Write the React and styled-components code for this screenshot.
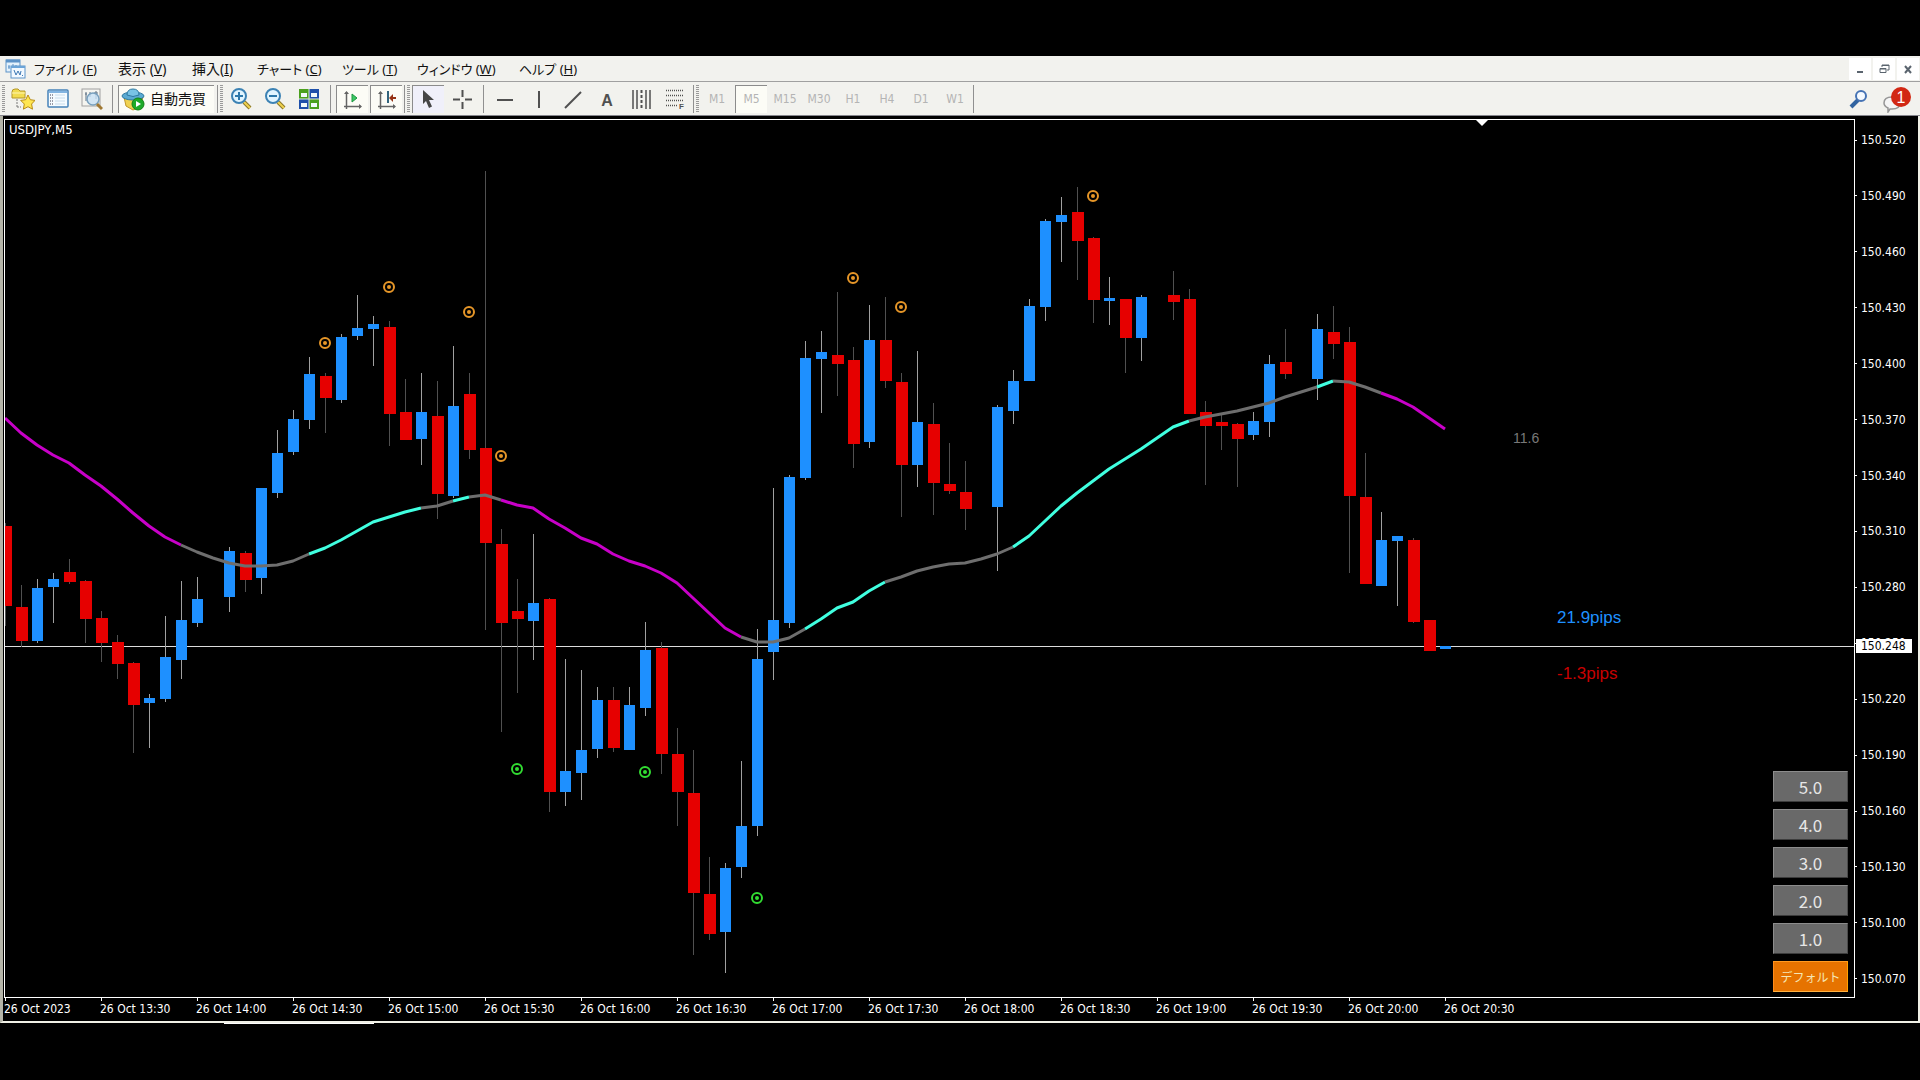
import React, { useState } from "react"
import styled, { createGlobalStyle, css } from "styled-components"

const uiFont = `"Liberation Sans", "Noto Sans CJK JP", sans-serif`
const menuFont = `"Noto Sans", "Noto Sans CJK JP", sans-serif`
const chartFont = `"DejaVu Sans Condensed", "Noto Sans", sans-serif`

const STEP = 16 // px per M5 bar
const BLUE = "#1e90ff"
const RED = "#e60000"
const trendColors = { m: "#c800c8", g: "#6e6e6e", c: "#40ffe0" }

const menus = [
  ["ファイル (", "F", 13],
  ["表示 (", "V", 14],
  ["挿入(", "I", 14],
  ["チャート (", "C", 13],
  ["ツール (", "T", 13],
  ["ウィンドウ (", "W", 13],
  ["ヘルプ (", "H", 13],
]
const periods = ["M1", "M5", "M15", "M30", "H1", "H4", "D1", "W1"]
const lots = ["5.0", "4.0", "3.0", "2.0", "1.0"]
const prices = Array.from({ length: 16 }, (v, i) => (150.52 - i * 0.03).toFixed(3))
const times = [
  "2023", "13:30", "14:00", "14:30", "15:00", "15:30", "16:00", "16:30",
  "17:00", "17:30", "18:00", "18:30", "19:00", "19:30", "20:00", "20:30",
]

// [bar, up, high, body top, body bottom, low]
const candles = [
  [0, 0, 404, 407, 487, 507], [1, 0, 466, 488, 522, 528], [2, 1, 460, 469, 522, 524],
  [3, 1, 454, 460, 468, 504], [4, 0, 440, 453, 463, 465], [5, 0, 461, 462, 500, 524],
  [6, 0, 492, 499, 524, 543], [7, 0, 516, 523, 545, 560], [8, 0, 543, 544, 586, 634],
  [9, 1, 575, 579, 584, 629], [10, 1, 497, 538, 580, 583], [11, 1, 462, 501, 541, 560],
  [12, 1, 458, 480, 504, 508], [14, 1, 428, 432, 478, 493], [15, 0, 432, 434, 461, 473],
  [16, 1, 369, 369, 459, 475], [17, 1, 311, 334, 374, 379], [18, 1, 291, 300, 333, 336],
  [19, 1, 238, 255, 301, 310], [20, 0, 254, 257, 279, 314], [21, 1, 215, 218, 281, 284],
  [22, 1, 176, 209, 217, 221], [23, 1, 197, 205, 210, 247], [24, 0, 202, 208, 295, 327],
  [25, 0, 260, 293, 321, 321], [26, 1, 254, 293, 320, 346], [27, 0, 262, 297, 375, 400],
  [28, 1, 227, 287, 377, 379], [29, 0, 254, 275, 331, 340], [30, 0, 52, 329, 424, 511],
  [31, 0, 410, 425, 504, 613], [32, 0, 460, 492, 500, 574], [33, 1, 415, 484, 502, 541],
  [34, 0, 479, 480, 673, 693], [35, 1, 540, 652, 673, 687], [36, 1, 551, 631, 654, 681],
  [37, 1, 568, 581, 630, 639], [38, 0, 568, 581, 629, 633], [39, 1, 568, 586, 631, 631],
  [40, 1, 503, 531, 589, 597], [41, 0, 523, 529, 635, 655], [42, 0, 609, 635, 673, 707],
  [43, 0, 631, 674, 774, 836], [44, 0, 738, 775, 815, 821], [45, 1, 744, 749, 813, 854],
  [46, 1, 642, 707, 748, 759], [47, 1, 510, 540, 707, 717], [48, 1, 369, 501, 533, 561],
  [49, 1, 356, 358, 504, 509], [50, 1, 222, 239, 359, 361], [51, 1, 212, 233, 240, 294],
  [52, 0, 173, 236, 245, 277], [53, 0, 228, 241, 325, 349], [54, 1, 186, 221, 323, 329],
  [55, 0, 178, 221, 262, 269], [56, 0, 254, 263, 346, 398], [57, 1, 232, 303, 346, 368],
  [58, 0, 284, 305, 364, 396], [59, 0, 324, 365, 372, 375], [60, 0, 342, 373, 390, 411],
  [62, 1, 286, 288, 388, 452], [63, 1, 251, 262, 292, 305], [64, 1, 180, 187, 262, 262],
  [65, 1, 100, 102, 188, 202], [66, 1, 78, 96, 103, 143], [67, 0, 68, 93, 122, 161],
  [68, 0, 118, 119, 181, 204], [69, 1, 158, 179, 182, 206], [70, 0, 180, 180, 219, 254],
  [71, 1, 176, 178, 219, 242], [73, 0, 152, 176, 183, 201], [74, 0, 170, 180, 295, 295],
  [75, 0, 282, 293, 307, 366], [76, 0, 294, 303, 307, 331], [77, 0, 304, 305, 320, 368],
  [78, 1, 293, 302, 316, 321], [79, 1, 236, 245, 303, 318], [80, 0, 210, 243, 255, 260],
  [82, 1, 195, 210, 260, 281], [83, 0, 187, 213, 225, 240], [84, 0, 208, 223, 377, 454],
  [85, 0, 334, 378, 465, 465], [86, 1, 393, 421, 467, 467], [87, 1, 417, 417, 422, 487],
  [88, 0, 419, 421, 503, 504], [89, 0, 501, 501, 532, 532], [90, 1, 527, 527, 530, 530],
]

// moving average, one value per bar
const average = [
  299, 314, 326, 336, 344, 356, 367, 380, 394, 407, 418, 426, 433, 439, 444, 447, 447, 446,
  442, 435, 429, 421, 412, 403, 398, 393, 389, 387, 382, 378, 376, 381, 386, 389, 400, 409,
  419, 425, 435, 442, 447, 454, 464, 479, 494, 509, 518, 523, 523, 519, 510, 500, 489, 483,
  472, 463, 458, 452, 448, 445, 444, 440, 435, 428, 417, 402, 387, 374, 362, 350, 340, 330,
  319, 308, 302, 298, 295, 292, 288, 284, 278, 273, 268, 262, 263, 268, 274, 280, 288, 299,
  310,
]
// [from bar, to bar, colour]
const trends = [
  [0, 11, "m"], [11, 19, "g"], [19, 26, "c"], [26, 28, "g"], [28, 29, "c"], [29, 31, "g"],
  [31, 46, "m"], [46, 50, "g"], [50, 55, "c"], [55, 63, "g"], [63, 74, "c"], [74, 82, "g"],
  [82, 83, "c"], [83, 86, "g"], [86, 90, "m"],
]
const signals = [
  [20, 224, "#e69628"], [24, 168, "#e69628"], [29, 193, "#e69628"], [31, 337, "#e69628"],
  [53, 159, "#e69628"], [56, 188, "#e69628"], [68, 77, "#e69628"],
  [32, 650, "#32dc32"], [40, 653, "#32dc32"], [47, 779, "#32dc32"],
]

const GlobalStyle = createGlobalStyle`
  * {
    box-sizing: border-box;
  }
  body {
    margin: 0;
    background: #000;
  }
  button {
    margin: 0;
    padding: 0;
    border: 0;
    background: none;
    color: inherit;
    font: inherit;
  }
`
const Screen = styled.div`
  min-height: 100vh;
  padding: 56px 0;
  background: #000;
  font-family: ${uiFont};
`
const MenuBar = styled.nav`
  display: flex;
  align-items: center;
  height: 26px;
  padding: 0 1px 0 5px;
  background: #f2f2ee;
  border-bottom: 1px solid #a0a0a0;
`
const MenuList = styled.div`
  display: grid;
  grid-template-columns: 84px 74px 65px 85px 75px 102px auto;
  flex: 1;
  justify-content: start;
  margin-left: 7px;
`
const MenuItem = styled.button`
  color: #111;
  font-family: ${menuFont};
  font-size: ${p => p.$size}px;
  line-height: 24px;
  font-feature-settings: "palt";
  text-align: left;
  white-space: nowrap;
`
const WindowButtons = styled.div`
  display: flex;
  gap: 2px;
`
const WindowButton = styled.button`
  display: flex;
  align-items: center;
  justify-content: center;
  width: 22px;
  height: 22px;
  background: #fff;
`
const Toolbar = styled.div`
  display: flex;
  align-items: center;
  height: 34px;
  padding: 0 8px 0 2px;
  background: #f2f2ee;
  border-bottom: 1px solid #85858c;
`
const Grip = styled.span`
  width: 3px;
  height: 28px;
  margin-right: 1px;
  background: repeating-linear-gradient(#9a9a9a 0 1px, transparent 1px 2px);
`
const Divider = styled.span`
  width: 1px;
  height: 28px;
  margin: ${p => (p.$end ? "0 2px 0 1px" : "0 4px")};
  background: #909090;
`
const pressed = css`
  background: ${p => p.$tint || "#fcfcf6"};
  border-left: 1px solid #8c8c8c;
  border-top: 1px solid #8c8c8c;
`
const Tool = styled.button`
  display: flex;
  align-items: center;
  justify-content: center;
  width: 32px;
  height: 28px;
  margin: 0 1px;
  ${p => p.$pressed && pressed}
`
const AutoTrade = styled.button`
  display: flex;
  align-items: center;
  gap: 5px;
  width: 96px;
  height: 28px;
  margin: 0 2px 0 1px;
  padding-left: 2px;
  color: #111;
  font-family: ${menuFont};
  font-size: 14px;
  line-height: 24px;
  white-space: nowrap;
  ${pressed}
`
const Period = styled(Tool)`
  color: #b4b4b4;
  font-family: ${chartFont};
  font-size: 12px;
`
const Spacer = styled.span`
  flex: 1;
`
const Notice = styled.button`
  display: flex;
  width: 30px;
  height: 28px;
  margin-left: 6px;
`
const ChartWindow = styled.main`
  display: grid;
  grid-template-columns: 1fr 63px;
  padding: 3px 0 0 1px;
  border-left: 3px solid #b4b4a8;
  border-right: 2px solid #f0f0e6;
  border-bottom: 2px solid #f0f0e6;
  color: #fff;
  font-family: ${chartFont};
  font-size: 12px;
`
const Plot = styled.section`
  position: relative;
  border: 1px solid #fff;
  border-top: 0;
  box-shadow: inset 0 1px 0 #fff;
`
const Drawing = styled.svg`
  display: block;
  width: 100%;
  height: 878px;
`
const LotPanel = styled.div`
  position: absolute;
  right: 6px;
  bottom: 5px;
  display: grid;
  gap: 7px;
`
const LotButton = styled.button`
  width: 75px;
  height: 31px;
  background: ${p => (p.$active ? "#e67300" : "#696969")};
  border: 1px solid;
  border-color: ${p => (p.$active ? "#ff9a20 #ffa000 #ffb040 #ff8c1a" : "#8c8c8c #4b4b4b #3c3c3c #8c8c8c")};
  color: ${p => (p.$active ? "#f5e6b4" : "#e6e6e6")};
  font-family: "Noto Sans CJK JP", sans-serif;
  font-size: ${p => (p.$active ? 12 : 17)}px;
  line-height: 28px;
`
const PriceAxis = styled.div`
  position: relative;
  display: flex;
  flex-direction: column;
  justify-content: space-between;
  padding: 13px 0 11px;
`
const Price = styled.span`
  display: flex;
  align-items: center;
  gap: 4px;
  height: 16px;

  &::before {
    content: "";
    width: 2px;
    height: 1px;
    background: #fff;
  }
`
const Bid = styled.strong`
  position: absolute;
  top: 520px;
  left: 1px;
  width: 56px;
  padding-left: 5px;
  background: #fff;
  color: #000;
  font-weight: 400;
  line-height: 14px;
`
const TimeAxis = styled.div`
  grid-column: 1 / -1;
  display: flex;
  height: 23px;
  overflow: hidden;
`
const Time = styled.span`
  flex: 0 0 96px;
  line-height: 16px;
  white-space: nowrap;

  &::before {
    content: "";
    display: block;
    width: 1px;
    height: 3px;
    margin-left: 1px;
    background: #fff;
  }
`
const TabEdge = styled.div`
  width: 150px;
  height: 1px;
  margin-left: 224px;
  background: #fff;
`

const Icon = ({ size = 24, children }) => (
  <svg width={size} height={size} viewBox={`0 0 ${size} ${size}`} fill="none" aria-hidden="true">
    {children}
  </svg>
)

const LogoIcon = () => (
  <Icon size={22}>
    <rect x="1" y="2" width="14" height="12" fill="#e4f2fc" stroke="#5c93c8" />
    <path d="M1 3h14" stroke="#5c93c8" strokeWidth="3" />
    <path d="M4 7v4M3 9h2M8 6v5M11 7v4" stroke="#5c93c8" />
    <rect x="6" y="8" width="14" height="12" fill="#f2f9ff" stroke="#5c93c8" />
    <path d="M6 9h14" stroke="#6aa4d8" strokeWidth="2" />
    <path d="M9 12l2 5 2-4 2 4 1-4M17 17l1 1" stroke="#3c78b4" />
  </Icon>
)
const FavoriteIcon = () => (
  <Icon>
    <path d="M1 5q0-3 3-3h3l2 2h5v7H1z" fill="#f2dc50" stroke="#b49628" />
    <path d="M1 6h13" stroke="#fff5b4" />
    <path d="M6 12v9M6 20h4" stroke="#787878" strokeDasharray="2 1" />
    <path d="M17 8l2.300 4.700 4.700.7-3.400 3.600.9 5.200L17 19.700l-4.600 2.500.9-5.200-3.600-3.600 5-.7z" fill="#ffe650" stroke="#b98c14" />
  </Icon>
)
const ListIcon = () => (
  <Icon>
    <rect x="3" y="3" width="20" height="17" rx="1" fill="#f5fbff" stroke="#4682b9" strokeWidth="1.500" />
    <path d="M4 5h18" stroke="#82b4e1" strokeWidth="2" />
    <path d="M5 8h3M5 11h3M5 14h3M5 17h3" stroke="#3c3c50" strokeDasharray="1 1" />
    <path d="M10 8h10M10 11h10M10 14h10M10 17h10" stroke="#c8dceb" />
  </Icon>
)
const TesterIcon = () => (
  <Icon>
    <rect x="3" y="2" width="18" height="17" fill="#f5f5f0" stroke="#a0a0a0" />
    <path d="M7 5v9M6 7h2M11 5v5M17 4v8M15 6h4" stroke="#5a6e82" />
    <circle cx="14" cy="12" r="6" fill="#c8e1f5" fillOpacity=".8" stroke="#78a0be" strokeWidth="1.500" />
    <path d="M18 17l5 5" stroke="#a07832" strokeWidth="3" />
  </Icon>
)
const AutoTradeIcon = () => (
  <Icon>
    <path d="M3 10l2 9 7 4 7-3 3-10z" fill="#f0d250" stroke="#be9628" />
    <ellipse cx="12" cy="9" rx="11" ry="4" fill="#5aaad2" stroke="#2d78a0" />
    <path d="M6 8q0-6 6-6t6 6q-6 3-12 0z" fill="#78c3e6" stroke="#2d78a0" />
    <circle cx="17" cy="17" r="6" fill="#1eaa28" stroke="#148214" />
    <path d="M15 14v6l5-3z" fill="#fff" />
  </Icon>
)
const ZoomIcon = ({ plus }) => (
  <Icon>
    <path d="M15 15l6 6" stroke="#8c7828" strokeWidth="4" />
    <path d="M15 15l6 6" stroke="#f0d250" strokeWidth="2" />
    <circle cx="10" cy="9" r="7" fill="#e1f5ff" stroke="#3c82b4" strokeWidth="2" />
    <path d={plus ? "M6 9h8M10 5v8" : "M6 9h8"} stroke="#2d78aa" strokeWidth="2" />
  </Icon>
)
const TileIcon = () => (
  <Icon>
    <path d="M2 2h10v10H2zM12 12h10v10H12z" fill="#4ba01e" />
    <path d="M12 2h10v10H12zM2 12h10v10H2z" fill="#1e50aa" />
    <path d="M4 6h6v4H4zM14 6h6v4h-6zM4 16h6v4H4zM14 16h6v4h-6z" fill="#f0fafa" />
    <path d="M2 12h20M12 2v20" stroke="#dce6dc" />
  </Icon>
)
const AxisIcon = ({ shift }) => (
  <Icon>
    <path d="M5.500 5v17M3 19.500h17" stroke="#646464" strokeWidth="1.500" />
    <path d="M3 7l2.500-3L8 7zM18 17l3 2.500-3 2.500z" fill="#646464" />
    {shift ? (
      <>
        <path d="M13 4v12" stroke="#32647d" strokeWidth="2" />
        <path d="M21 11h-4" stroke="#963214" strokeWidth="2" />
        <path d="M14 11l4-4v8z" fill="#963214" />
      </>
    ) : (
      <path d="M11 7v8l5-4z" fill="#3cc864" stroke="#1e9640" />
    )}
  </Icon>
)
const LineToolIcon = ({ d }) => (
  <Icon>
    <path d={d} stroke="#505050" strokeWidth="2" />
  </Icon>
)
const CursorIcon = () => (
  <Icon>
    <path d="M6 3v14l3-3 3 7 3-1.500-3-6.500h5z" fill="#464646" />
  </Icon>
)
const TextIcon = () => (
  <Icon>
    <text x="12" y="19" fill="#505050" fontSize="16" fontWeight="700" textAnchor="middle">A</text>
  </Icon>
)
const ChannelIcon = () => (
  <Icon>
    <path d="M4 3v19M8 3v19M17 3v19M21 3v19" stroke="#505050" strokeWidth="1.500" />
    <path d="M12.500 3v19" stroke="#505050" strokeWidth="2" strokeDasharray="3 2" />
  </Icon>
)
const FiboIcon = () => (
  <Icon>
    <path d="M3 3.500h18M3 8.500h18M3 13.500h18M3 18.500h12" stroke="#505050" strokeWidth="1.500" strokeDasharray="1 1" />
    <text x="16" y="22" fill="#505050" fontSize="8" fontWeight="700">F</text>
  </Icon>
)
const SearchIcon = () => (
  <Icon>
    <path d="M4 20l7-7" stroke="#3264a0" strokeWidth="4" />
    <circle cx="14" cy="9" r="5" fill="#f5faff" stroke="#4673b4" strokeWidth="2" />
  </Icon>
)
const NoticeIcon = () => (
  <svg width="30" height="28" viewBox="0 0 30 28" aria-hidden="true">
    <path d="M2 18q0-6 8-6t8 6-8 6H8l-2 3v-4q-4-2-4-5z" fill="#f5f5f5" stroke="#969696" strokeWidth="1.500" />
    <circle cx="19" cy="12" r="10" fill="#d22814" />
    <text x="19" y="18" fill="#fff" fontSize="16" textAnchor="middle">1</text>
  </svg>
)

const PriceChart = () => (
  <Drawing role="img" aria-label="USDJPY,M5">
    <text x="4" y="15" fill="#fff" fontSize="13">USDJPY,M5</text>
    <path d="M1471 1h12l-6 6z" fill="#fff" />
    <rect y="527" width="100%" height="1" fill="#dcdcdc" />
    <g shapeRendering="crispEdges">
      {candles.map(([bar, up, high, top, bottom, low]) => (
        <g key={bar}>
          <rect x={bar * STEP} y={high} width="1" height={low - high} fill={up ? "#a0a0a0" : "#505050"} />
          <rect x={bar * STEP - 5} y={top} width={up ? 11 : 12} height={bottom - top} fill={up ? BLUE : RED} />
        </g>
      ))}
    </g>
    {trends.map(([from, to, color]) => (
      <polyline
        key={from}
        points={average.slice(from, to + 1).map((y, i) => `${(from + i) * STEP},${y}`).join(" ")}
        fill="none"
        stroke={trendColors[color]}
        strokeWidth="3"
        strokeLinejoin="round"
      />
    ))}
    {signals.map(([bar, y, color]) => (
      <g key={bar}>
        <circle cx={bar * STEP} cy={y} r="5" fill="none" stroke={color} strokeWidth="2" />
        <circle cx={bar * STEP} cy={y} r="2" fill={color} />
      </g>
    ))}
    <g fontFamily="Liberation Sans">
      <text x="1508" y="324" fill="#787878" fontSize="14">11.6</text>
      <text x="1552" y="504" fill="#1e90ff" fontSize="17">21.9pips</text>
      <text x="1552" y="560" fill="#c80000" fontSize="17">-1.3pips</text>
    </g>
  </Drawing>
)

export default function App() {
  const [period, setPeriod] = useState("M5")
  const [lot, setLot] = useState("デフォルト")
  return (
    <Screen>
      <GlobalStyle />
      <MenuBar>
        <LogoIcon />
        <MenuList>
          {menus.map(([label, key, size]) => (
            <MenuItem key={key} $size={size}>{label}<u>{key}</u>)</MenuItem>
          ))}
        </MenuList>
        <WindowButtons>
          <WindowButton aria-label="最小化">
            <Icon size={12}><path d="M3 9h6" stroke="#5a646e" strokeWidth="2" /></Icon>
          </WindowButton>
          <WindowButton aria-label="元に戻す">
            <Icon size={12}>
              <path d="M4 4V2h7v5H9M4 2.500h7M2 5.500h6v4H2zM2 6h6" stroke="#5a646e" />
            </Icon>
          </WindowButton>
          <WindowButton aria-label="閉じる">
            <Icon size={12}><path d="M3 3l6 7M9 3l-6 7" stroke="#5a646e" strokeWidth="2" /></Icon>
          </WindowButton>
        </WindowButtons>
      </MenuBar>
      <Toolbar>
        <Grip />
        <Tool aria-label="気配値表示"><FavoriteIcon /></Tool>
        <Tool aria-label="ターミナル"><ListIcon /></Tool>
        <Tool aria-label="ストラテジーテスター"><TesterIcon /></Tool>
        <Divider />
        <AutoTrade><AutoTradeIcon />自動売買</AutoTrade>
        <Divider $end />
        <Grip />
        <Tool aria-label="拡大"><ZoomIcon plus /></Tool>
        <Tool aria-label="縮小"><ZoomIcon /></Tool>
        <Tool aria-label="整列"><TileIcon /></Tool>
        <Divider />
        <Tool aria-label="自動スクロール" $pressed><AxisIcon /></Tool>
        <Tool aria-label="チャートシフト" $pressed><AxisIcon shift /></Tool>
        <Divider $end />
        <Grip />
        <Tool aria-label="カーソル" $pressed $tint="#f0f0fa"><CursorIcon /></Tool>
        <Tool aria-label="十字カーソル"><LineToolIcon d="M3 12.500h7M15 12.500h7M12.500 3v7M12.500 15v7" /></Tool>
        <Divider />
        <Tool aria-label="水平線"><LineToolIcon d="M4 13h16" /></Tool>
        <Tool aria-label="垂直線"><LineToolIcon d="M12 4v17" /></Tool>
        <Tool aria-label="トレンドライン"><LineToolIcon d="M4 21L20 5" /></Tool>
        <Tool aria-label="テキスト"><TextIcon /></Tool>
        <Tool aria-label="チャネル"><ChannelIcon /></Tool>
        <Tool aria-label="フィボナッチ"><FiboIcon /></Tool>
        <Divider $end />
        <Grip />
        {periods.map(item => (
          <Period key={item} $pressed={item === period} onClick={() => setPeriod(item)}>{item}</Period>
        ))}
        <Divider $end />
        <Spacer />
        <Tool aria-label="検索"><SearchIcon /></Tool>
        <Notice aria-label="通知"><NoticeIcon /></Notice>
      </Toolbar>
      <ChartWindow>
        <Plot>
          <PriceChart />
          <LotPanel>
            {[...lots, "デフォルト"].map(item => (
              <LotButton key={item} $active={item === lot} onClick={() => setLot(item)}>{item}</LotButton>
            ))}
          </LotPanel>
        </Plot>
        <PriceAxis>
          {prices.map(item => <Price key={item}>{item}</Price>)}
          <Bid>150.248</Bid>
        </PriceAxis>
        <TimeAxis>
          {times.map(item => <Time key={item}>26 Oct {item}</Time>)}
        </TimeAxis>
      </ChartWindow>
      <TabEdge />
    </Screen>
  )
}
